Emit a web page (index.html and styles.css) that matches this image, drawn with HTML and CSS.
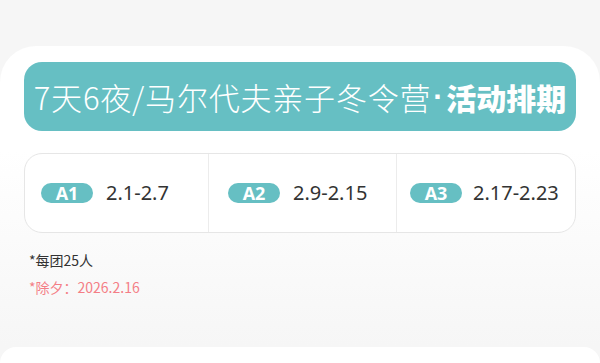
FILE: index.html
```html
<!DOCTYPE html>
<html lang="zh">
<head>
<meta charset="utf-8">
<link rel="stylesheet" href="styles.css">
</head>
<body>
<div class="page">
  <section class="card">
    <div class="banner">
      <span class="title-light">7天6夜/马尔代夫亲子冬令营</span><span class="title-dot">·</span><span class="title-bold">活动排期</span>
    </div>
    <div class="dates">
      <div class="slot slot-1"><span class="pill">A1</span><span class="range">2.1-2.7</span></div>
      <div class="slot slot-2"><span class="pill">A2</span><span class="range">2.9-2.15</span></div>
      <div class="slot slot-3"><span class="pill">A3</span><span class="range">2.17-2.23</span></div>
    </div>
    <p class="note">*每团25人</p>
    <p class="note note-red">*除夕：2026.2.16</p>
  </section>
  <section class="card next"></section>
</div>
</body>
</html>
```

FILE: styles.css
```css
html, body {
  margin: 0;
  padding: 0;
}
body {
  background: #f6f6f6;
  font-family: "Noto Sans CJK SC", "Noto Sans", sans-serif;
  width: 600px;
  height: 363px;
  overflow: hidden;
}
.page {
  padding-top: 46px;
}
.card {
  box-sizing: border-box;
  height: 301px;
  border-radius: 36px 36px 0 0;
  background: linear-gradient(180deg, #ffffff 0%, #ffffff 35%, #f6f6f6 100%);
  padding: 16px 24px 0;
}
.card.next {
  background: #ffffff;
  height: 16px;
  padding: 0;
}
.banner {
  height: 69px;
  border-radius: 18px;
  background: #66bfc3;
  color: #fff;
  display: flex;
  align-items: center;
  justify-content: center;
  line-height: 1;
  white-space: nowrap;
}
.title-light {
  font-size: 31px;
  font-weight: 300;
  letter-spacing: 0.8px;
}
.title-dot {
  font-family: "Liberation Sans", sans-serif;
  font-weight: 700;
  font-size: 30px;
  padding: 0 3px 0 2px;
}
.title-bold {
  font-size: 30px;
  font-weight: 900;
}
.dates {
  margin-top: 22px;
  height: 80px;
  box-sizing: border-box;
  border: 1px solid #e6e6e6;
  border-radius: 18px;
  background: #fff;
  display: flex;
}
.slot {
  display: flex;
  align-items: center;
  gap: 13px;
}
.slot-1 {
  width: 184px;
  padding-left: 16px;
  box-sizing: border-box;
  border-right: 1px solid #ececec;
}
.slot-2 {
  width: 188px;
  padding-left: 19px;
  box-sizing: border-box;
  border-right: 1px solid #ececec;
}
.slot-3 {
  flex: 1;
  padding-left: 13px;
  gap: 11px;
}
.pill {
  width: 52px;
  height: 20px;
  border-radius: 10px;
  background: #66bfc3;
  color: #fff;
  font-family: "Open Sans", "Noto Sans", sans-serif;
  font-weight: 700;
  font-size: 18px;
  line-height: 20px;
  text-align: center;
}
.range {
  font-family: "Noto Sans", "Open Sans", sans-serif;
  font-size: 20px;
  color: #333;
  line-height: 1;
}
.note {
  margin: 0;
  font-size: 14px;
  line-height: 27px;
  color: #333;
  padding-left: 5px;
}
.note:first-of-type {
  margin-top: 14px;
}
.note-red {
  color: #f47e86;
}
```
